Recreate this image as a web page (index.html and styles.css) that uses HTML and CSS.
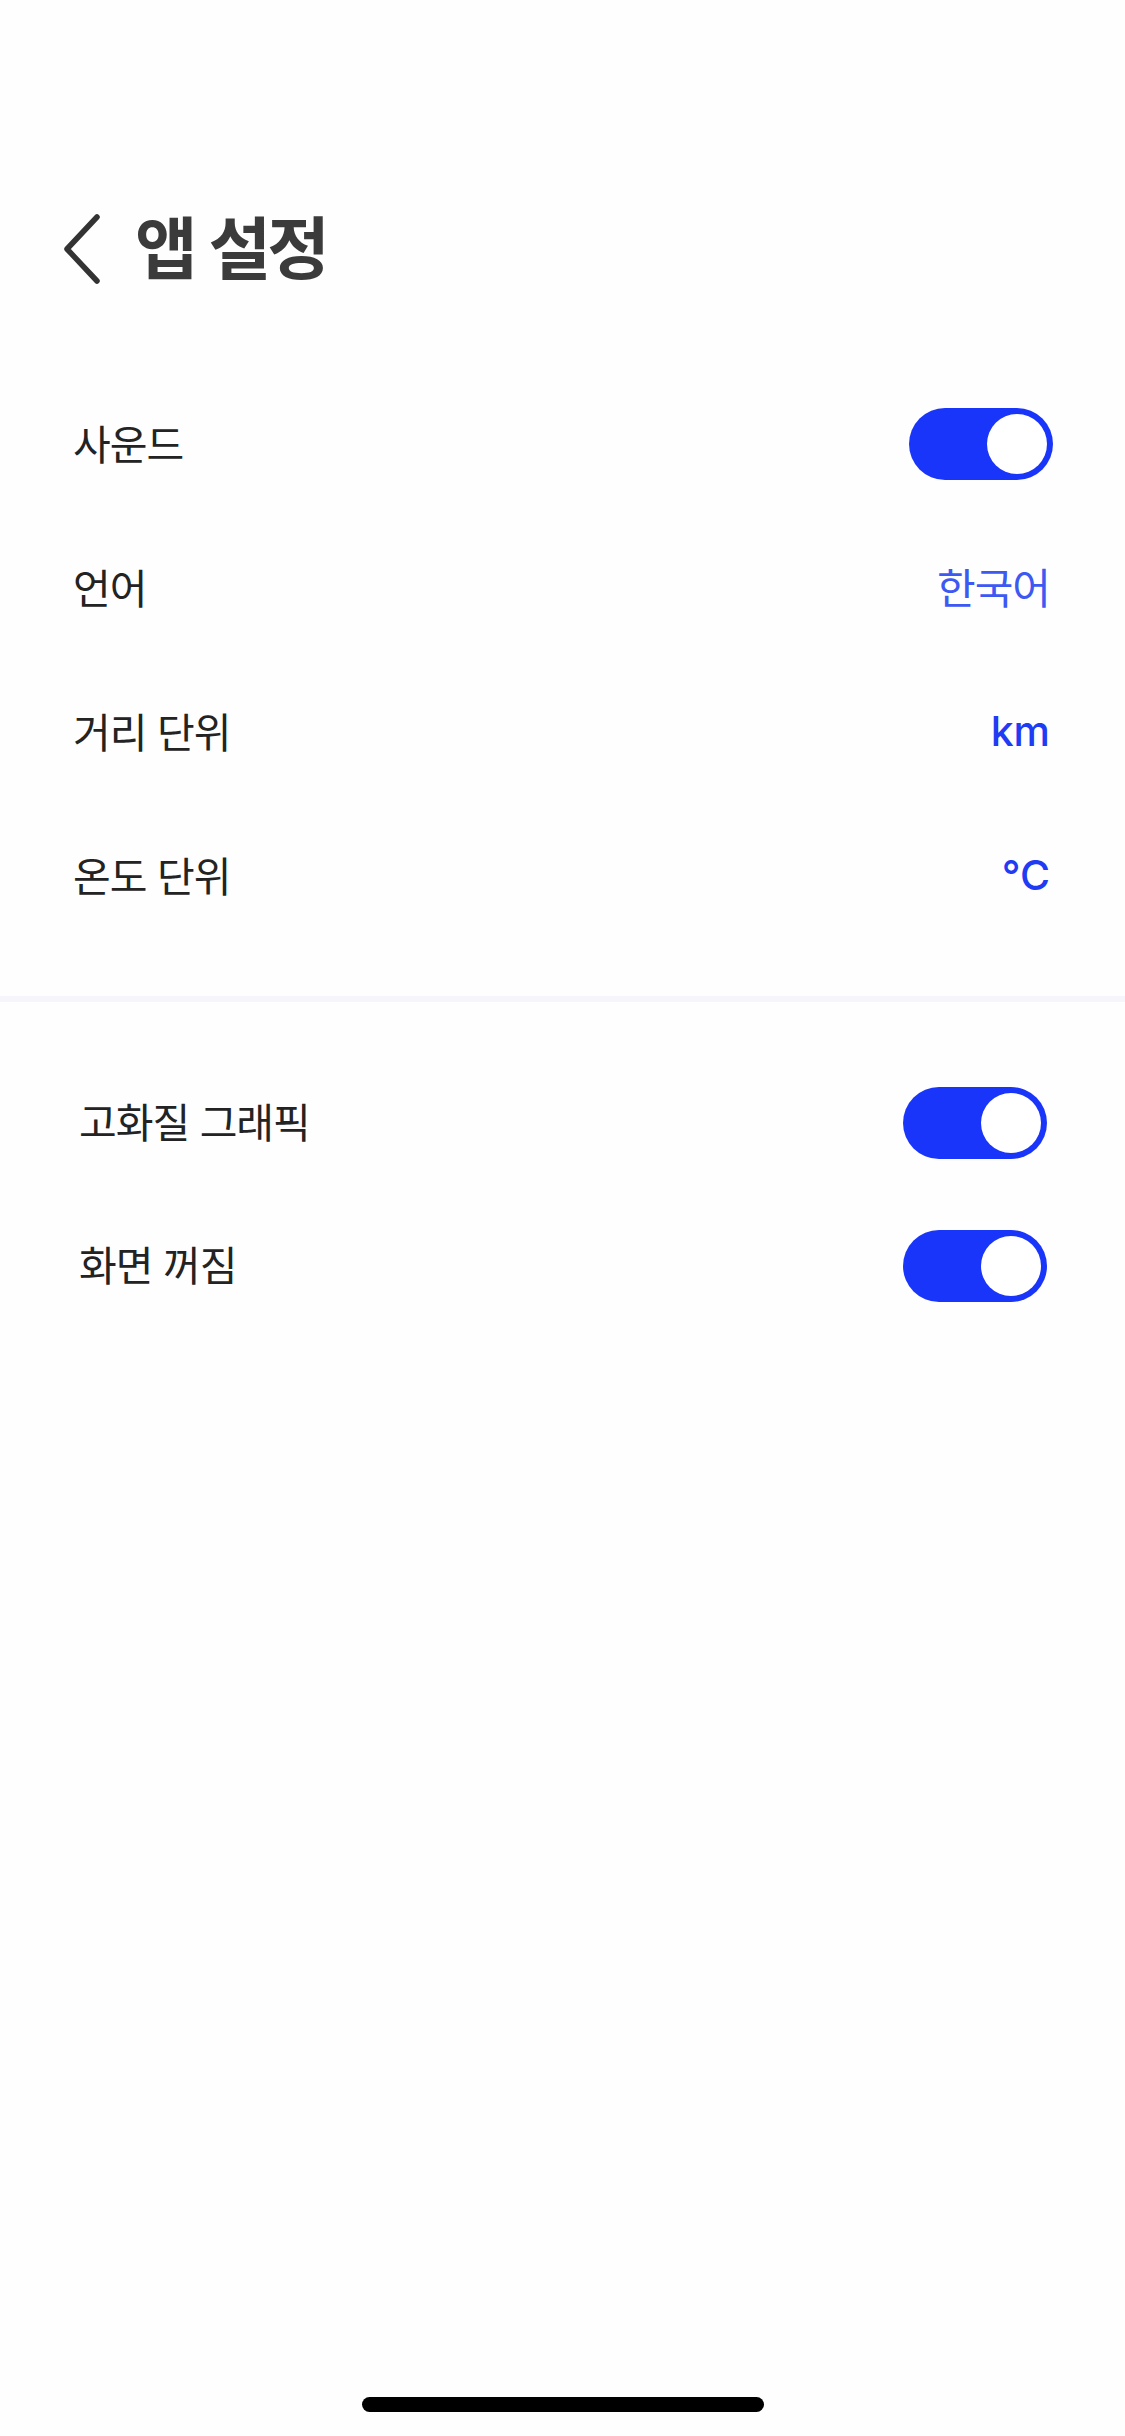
FILE: index.html
```html
<!DOCTYPE html>
<html lang="ko">
<head>
    <meta charset="UTF-8">
    <meta name="viewport" content="width=device-width, initial-scale=1.0">
    <title>앱 설정</title>
    <link rel="stylesheet" href="styles.css">
</head>
<body>

    <div class="screen">
        <header class="header">
            <button class="back-btn" aria-label="뒤로">
                <svg width="40" height="72" viewBox="0 0 40 72">
                    <polyline points="34,4 4,36 34,68" fill="none" stroke="#333" stroke-width="5.5" stroke-linecap="round" stroke-linejoin="round" />
                </svg>
            </button>
            <h1>앱 설정</h1>
        </header>

        <section class="settings-group first">
            <div class="row">
                <span class="label">사운드</span>
                <span class="toggle on"><span class="knob"></span></span>
            </div>
            <div class="row">
                <span class="label">언어</span>
                <span class="value light">한국어</span>
            </div>
            <div class="row">
                <span class="label">거리 단위</span>
                <span class="value strong">km</span>
            </div>
            <div class="row">
                <span class="label">온도 단위</span>
                <span class="value strong">°C</span>
            </div>
        </section>

        <div class="divider"></div>

        <section class="settings-group second">
            <div class="row">
                <span class="label">고화질 그래픽</span>
                <span class="toggle on"><span class="knob"></span></span>
            </div>
            <div class="row">
                <span class="label">화면 꺼짐</span>
                <span class="toggle on"><span class="knob"></span></span>
            </div>
        </section>

        <div class="home-indicator"></div>
    </div>

</body>
</html>
```

FILE: styles.css
```css
* {
    margin: 0;
    padding: 0;
    box-sizing: border-box;
}

body {
    font-family: "Noto Sans CJK KR", "Noto Sans", sans-serif;
    background-color: #fefefe;
    color: #222;
}

.screen {
    width: 1125px;
    height: 2436px;
    display: flex;
    flex-direction: column;
    position: relative;
}

.header {
    display: flex;
    align-items: center;
    height: 130px;
    margin-top: 184px;
    padding-left: 63px;
}

.back-btn {
    background: none;
    border: none;
    display: flex;
    align-items: center;
    width: 72px;
    height: 72px;
}

.header h1 {
    font-size: 68px;
    font-weight: 700;
    color: #3b3b3b;
    letter-spacing: -4px;
    line-height: 1;
    padding-bottom: 8px;
}

.settings-group.first {
    padding: 58px 72px 0 73px;
}

.settings-group.second {
    padding: 49px 78px 0 79px;
}

.row {
    display: flex;
    align-items: center;
    justify-content: space-between;
    height: 144px;
}

.settings-group.second .row {
    height: 143px;
}

.label {
    font-size: 41px;
    color: #232323;
    letter-spacing: -1px;
    padding-bottom: 5px;
}

.value {
    font-size: 42px;
    color: #1f3bf3;
    padding-right: 3px;
    padding-bottom: 5px;
}

.value.light {
    color: #3d59f2;
    letter-spacing: -1px;
}

.value.strong {
    font-family: Inter, Roboto, sans-serif;
    font-weight: 500;
    font-size: 41px;
    padding-bottom: 2px;
}

.toggle {
    display: flex;
    align-items: center;
    justify-content: flex-end;
    width: 144px;
    height: 72px;
    padding: 6px;
    border-radius: 36px;
    background-color: #1a35fa;
}

.knob {
    width: 60px;
    height: 60px;
    border-radius: 50%;
    background-color: #fff;
}

.divider {
    height: 6px;
    margin-top: 48px;
    background-color: #f5f5fb;
}

.home-indicator {
    position: absolute;
    left: 362px;
    top: 2397px;
    width: 402px;
    height: 15px;
    border-radius: 8px;
    background-color: #000;
}
```
